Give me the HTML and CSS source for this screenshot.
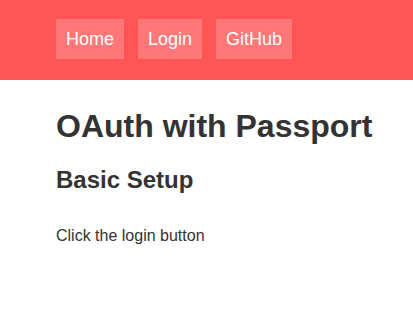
FILE: index.html
```html
<!DOCTYPE html>
<html lang="en">
<head>
    <meta charset="UTF-8">
    <meta name="viewport" content="width=device-width, initial-scale=1.0">
    <title>OAuth with Passport</title>
    <link rel="stylesheet" href="styles.css">
</head>
<body>
    <div class="nav">
        <a class="nav-link" href="/">Home</a>
        <a class="nav-link" href="/auth/login">Login</a>
        <a class="nav-link" href="/auth/github">GitHub</a>
    </div>
    <div class="main">
        <h1>OAuth with Passport</h1>
        <h2>Basic Setup</h2>
        <p>Click the login button</p>
    </div>
</body>
</html>
```

FILE: styles.css
```css
body{
    margin: 0;
    font-family: "Liberation Sans", Arial, sans-serif;
    color: #333;
    background-color: white;
}
.nav{
    height: 80px;
    background-color: #ff5555;
    display: flex;
    align-items: flex-start;
    gap: 14px;
    padding: 19px 56px 0;
    box-sizing: border-box;
}
.nav-link{
    color: white;
    text-decoration: none;
    font-size: 18px;
    line-height: 20px;
    padding: 10px;
    background-color: rgba(255, 255, 255, 0.2);
}
.main{
    padding: 0 16px 0 56px;
}
h1{
    font-size: 32px;
    margin: 28px 0 21px;
    white-space: nowrap;
}
h2{
    font-size: 24px;
    margin: 0 0 33px;
}
p{
    font-size: 16px;
    margin: 0;
}
```
